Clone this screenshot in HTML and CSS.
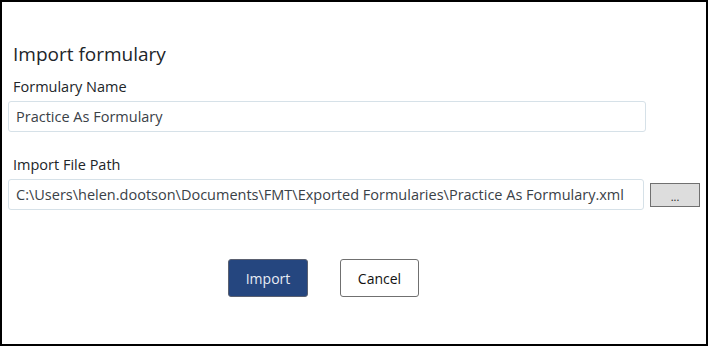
FILE: index.html
```html
<!DOCTYPE html>
<html lang="en">
<head>
  <meta charset="UTF-8">
  <meta name="viewport" content="width=device-width, initial-scale=1.0">
  <link rel="stylesheet" href="styles.css">
</head>
<body>

  <div class="dialog">
    <h2 class="title">Import formulary</h2>

    <label class="field-label" for="formularyName">Formulary Name</label>
    <input class="field" type="text" id="formularyName" value="Practice As Formulary">

    <label class="field-label path-label" for="filePath">Import File Path</label>
    <div class="path-row">
      <input class="field" type="text" id="filePath" value="C:\Users\helen.dootson\Documents\FMT\Exported Formularies\Practice As Formulary.xml">
      <button class="browse">...</button>
    </div>

    <div class="actions">
      <button class="btn btn-primary">Import</button>
      <button class="btn btn-cancel">Cancel</button>
    </div>
  </div>

</body>
</html>
```

FILE: styles.css
```css
body {
  margin: 0;
  font-family: "Open Sans", "Noto Sans", sans-serif;
  color: #212529;
  background-color: white;
}

.dialog {
  width: 708px;
  height: 346px;
  box-sizing: border-box;
  border: 2px solid black;
  padding: 39px 6px 0 6px;
}

.title {
  font-size: 19px;
  font-weight: normal;
  line-height: 26px;
  margin: 0 0 10px 5px;
}

.field-label {
  display: block;
  font-size: 14.5px;
  line-height: 20px;
  margin: 0 0 4px 5px;
}

.path-label {
  margin-top: 23px;
}

.field {
  display: block;
  width: 638px;
  height: 31px;
  box-sizing: border-box;
  border: 1px solid #d6e1e8;
  border-radius: 3px;
  padding: 0 7px;
  font-family: "Open Sans", "Noto Sans", sans-serif;
  font-size: 14.5px;
  color: #3a4147;
  background-color: white;
}

.path-row {
  display: flex;
  align-items: flex-start;
  gap: 6px;
}

.browse {
  margin-top: 4px;
  width: 50px;
  height: 24px;
  background-color: #dddddd;
  border: 1px solid #707070;
  font-size: 11px;
  padding: 2px 0 0 0;
  color: #222;
  font-family: "Open Sans", "Noto Sans", sans-serif;
}

.actions {
  display: flex;
  gap: 32px;
  margin: 49px 0 0 220px;
}

.btn {
  width: 80px;
  height: 38px;
  border-radius: 3px;
  font-family: "Open Sans", "Noto Sans", sans-serif;
  font-size: 14px;
  cursor: pointer;
}

.btn-primary {
  background-color: #25467f;
  border: 1px solid #5a6070;
  color: #e8ecf4;
}

.btn-cancel {
  width: 79px;
  background-color: white;
  border: 1px solid #707070;
  color: #111;
}
```
